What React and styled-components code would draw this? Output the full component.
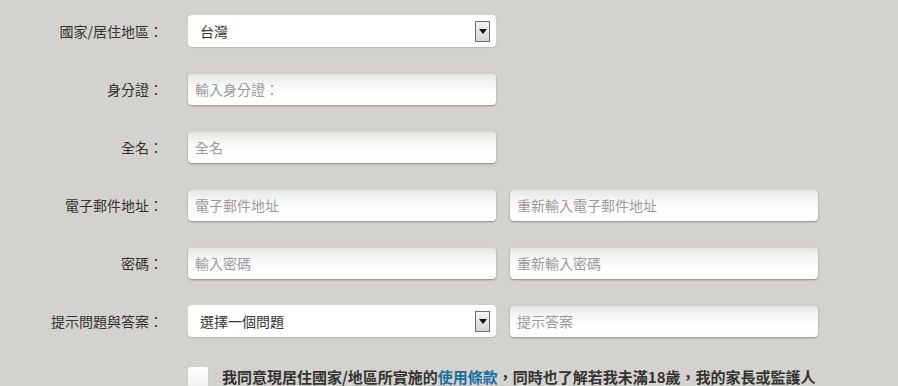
import styled, { createGlobalStyle } from "styled-components";

const GlobalStyle = createGlobalStyle`
    body {
        margin: 0;
        background-color: #d4d2ce;
        font-family: "Liberation Sans", "Noto Sans CJK TC", sans-serif;
    }
`;

export default function App() {
    return (
        <>
            <GlobalStyle />
            <Form>
                <Row>
                    <Label>國家/居住地區：</Label>
                    <Select value="台灣" />
                </Row>
                <Row>
                    <Label>身分證：</Label>
                    <Field placeholder="輸入身分證：" />
                </Row>
                <Row>
                    <Label>全名：</Label>
                    <Field placeholder="全名" />
                </Row>
                <Row>
                    <Label>電子郵件地址：</Label>
                    <Field placeholder="電子郵件地址" />
                    <Field placeholder="重新輸入電子郵件地址" />
                </Row>
                <Row>
                    <Label>密碼：</Label>
                    <Field type="password" placeholder="輸入密碼" />
                    <Field type="password" placeholder="重新輸入密碼" />
                </Row>
                <Row>
                    <Label>提示問題與答案：</Label>
                    <Select value="選擇一個問題" />
                    <Field placeholder="提示答案" />
                </Row>
                <Agree>
                    <Check />
                    <AgreeText>
                        我同意現居住國家/地區所實施的<TermsLink href="#">使用條款</TermsLink>，同時也了解若我未滿18歲，我的家長或監護人
                    </AgreeText>
                </Agree>
            </Form>
        </>
    );
}

function Select({ value }) {
    return (
        <SelectBox>
            <span>{value}</span>
            <Arrow>
                <svg width="8" height="5" viewBox="0 0 8 5">
                    <path d="M0 0 L8 0 L4 5 Z" fill="#111" />
                </svg>
            </Arrow>
        </SelectBox>
    );
}

const Form = styled.div`
    padding-top: 15px;
    display: flex;
    flex-direction: column;
    gap: 26px;
`;

const Row = styled.div`
    display: flex;
    align-items: center;
    gap: 14px;
    height: 32px;
`;

const Label = styled.label`
    width: 163px;
    margin-right: 11px;
    text-align: right;
    font-size: 14px;
    color: #333;
    font-family: "Noto Sans CJK TC", sans-serif;
    white-space: nowrap;
`;

const Field = styled.input`
    width: 308px;
    height: 32px;
    box-sizing: border-box;
    border: 0;
    border-radius: 4px;
    padding: 0 7px;
    background: linear-gradient(to bottom, #e4e4e4 0%, #f6f6f6 35%, #ffffff 70%, #fcfcfc 100%);
    box-shadow: 0 1px 2px rgba(0, 0, 0, 0.35), inset 0 1px 1px rgba(0, 0, 0, 0.08);
    font-family: "Noto Sans CJK TC", sans-serif;
    font-size: 14px;
    color: #333;
    outline: none;
    &::placeholder {
        color: #9b9b9b;
    }
`;

const SelectBox = styled.div`
    width: 308px;
    height: 32px;
    box-sizing: border-box;
    border-radius: 4px;
    background: #ffffff;
    box-shadow: 0 1px 1px rgba(0, 0, 0, 0.12);
    padding: 0 6px 0 12px;
    display: flex;
    align-items: center;
    justify-content: space-between;
    font-family: "Noto Sans CJK TC", sans-serif;
    font-size: 14px;
    color: #333;
`;

const Arrow = styled.div`
    width: 15px;
    height: 21px;
    box-sizing: border-box;
    border: 1px solid #6f6f6f;
    background: linear-gradient(to bottom, #f4f4f4, #d6d6d6);
    display: flex;
    align-items: center;
    justify-content: center;
`;

const Agree = styled.div`
    display: flex;
    align-items: flex-start;
    gap: 14px;
    padding-left: 188px;
    margin-top: 4px;
`;

const Check = styled.div`
    width: 20px;
    height: 22px;
    flex-shrink: 0;
    border-radius: 2px;
    background: linear-gradient(to bottom, #ffffff, #eeeeee);
    box-shadow: 0 0 1px rgba(0, 0, 0, 0.2);
`;

const AgreeText = styled.p`
    margin: 1px 0 0;
    font-family: "Noto Sans CJK TC", sans-serif;
    font-size: 15px;
    font-weight: 700;
    color: #333;
    white-space: nowrap;
    line-height: 18px;
`;

const TermsLink = styled.a`
    color: #17709f;
    text-decoration: none;
`;
